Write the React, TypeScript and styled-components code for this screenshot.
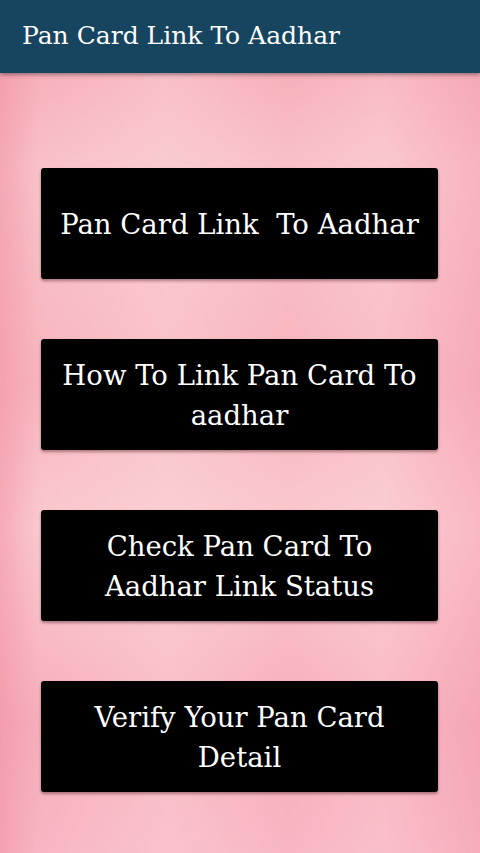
import React from 'react';
import styled, { createGlobalStyle } from 'styled-components';

const GlobalStyle = createGlobalStyle`
    html, body {
        margin: 0;
        padding: 0;
        height: 100%;
    }
    body {
        font-family: "DejaVu Serif", "Liberation Serif", serif;
    }
    #root {
        min-height: 100%;
    }
`;

const menuItems = [
    'Pan Card Link\u00a0 To Aadhar',
    'How To Link Pan Card To aadhar',
    'Check Pan Card To Aadhar Link Status',
    'Verify Your Pan Card Detail',
];

const App = () => {
    return (
        <Page>
            <GlobalStyle />
            <Toolbar>
                <Toolbar_title>Pan Card Link To Aadhar</Toolbar_title>
            </Toolbar>
            <Content>
                {menuItems.map((label, index) => (
                    <Menu_button key={index}>{label}</Menu_button>
                ))}
            </Content>
        </Page>
    );
};

const Page = styled.div`
    width: 480px;
    height: 853px;
    display: flex;
    flex-direction: column;
    overflow: hidden;
    background:
        linear-gradient(90deg,
            rgba(243, 140, 160, 0.5) 0%,
            rgba(248, 180, 190, 0) 8%,
            rgba(255, 225, 228, 0.3) 35%,
            rgba(250, 200, 205, 0) 60%,
            rgba(255, 220, 225, 0.25) 80%,
            rgba(245, 150, 170, 0.3) 100%),
        linear-gradient(180deg,
            #f5a3b0 0%,
            #f8c2c8 20%,
            #f7b4bd 45%,
            #fac9cf 62%,
            #f6adba 85%,
            #f7b6c3 100%);
`;

const Toolbar = styled.div`
    height: 73px;
    flex-shrink: 0;
    background: #17455f;
    display: flex;
    align-items: center;
    padding: 0 22px;
    box-shadow: 0 2px 4px rgba(0, 0, 0, 0.35);
    position: relative;
    z-index: 1;
`;

const Toolbar_title = styled.div`
    color: #ffffff;
    font-size: 25px;
    margin-top: -2px;
`;

const Content = styled.div`
    display: flex;
    flex-direction: column;
    gap: 60px;
    padding: 95px 42px 0 41px;
`;

const Menu_button = styled.button`
    height: 111px;
    width: 397px;
    background: #000000;
    border: none;
    border-radius: 3px;
    box-shadow: 0 2px 3px rgba(80, 30, 40, 0.45);
    padding: 0 16px;

    display: flex;
    justify-content: center;
    align-items: center;
    text-align: center;

    font-family: "DejaVu Serif", "Liberation Serif", serif;
    font-size: 27.5px;
    line-height: 40px;
    color: #ffffff;
    cursor: pointer;
`;

export default App;
